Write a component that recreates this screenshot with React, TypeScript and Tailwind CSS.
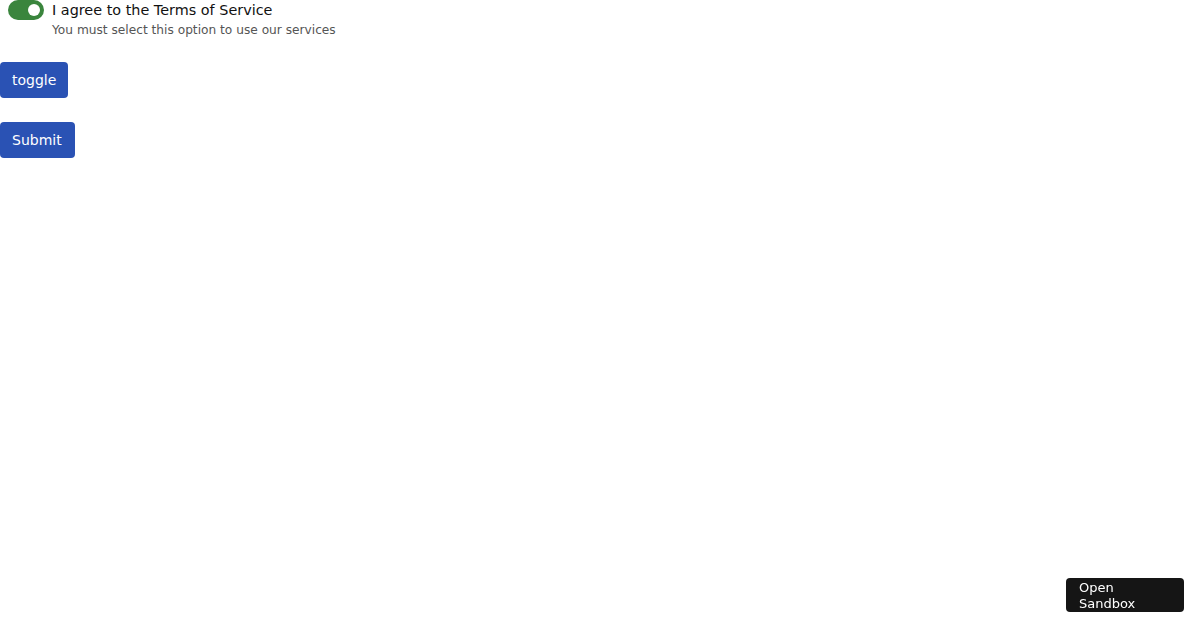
import React, { useState } from "react";

export default function App() {
  const [on, setOn] = useState(true);
  return (
    <div className="min-h-[630px] bg-white text-[#111] font-['DejaVu_Sans',sans-serif]">
      <div className="flex items-start gap-2 pl-2">
        <button
          onClick={() => setOn(!on)}
          className={`w-9 h-5 rounded-full flex items-center px-1 ${on ? "bg-[#3a853d] justify-end" : "bg-gray-400 justify-start"}`}
        >
          <span className="w-3 h-3 rounded-full bg-white" />
        </button>
        <div className="flex flex-col">
          <span className="text-[14.4px] leading-[20px] text-[#111]">I agree to the Terms of Service</span>
          <span className="text-[12.2px] leading-[20px] text-[#555]">You must select this option to use our services</span>
        </div>
      </div>
      <div className="mt-[22px]">
        <button onClick={() => setOn(!on)} className="h-9 px-3 rounded bg-[#2a52b4] text-white text-[14px]">
          toggle
        </button>
      </div>
      <div className="mt-6">
        <button className="h-9 pl-3 pr-[13px] rounded bg-[#2a52b4] text-white text-[14px]">Submit</button>
      </div>
      <div className="fixed right-4 bottom-[18px] w-[118px] h-[34px] rounded bg-[#151515] text-white text-[13px] leading-[16px] pl-[13px] pt-[2px] flex flex-col justify-center">
        <span>Open</span>
        <span>Sandbox</span>
      </div>
    </div>
  );
}
